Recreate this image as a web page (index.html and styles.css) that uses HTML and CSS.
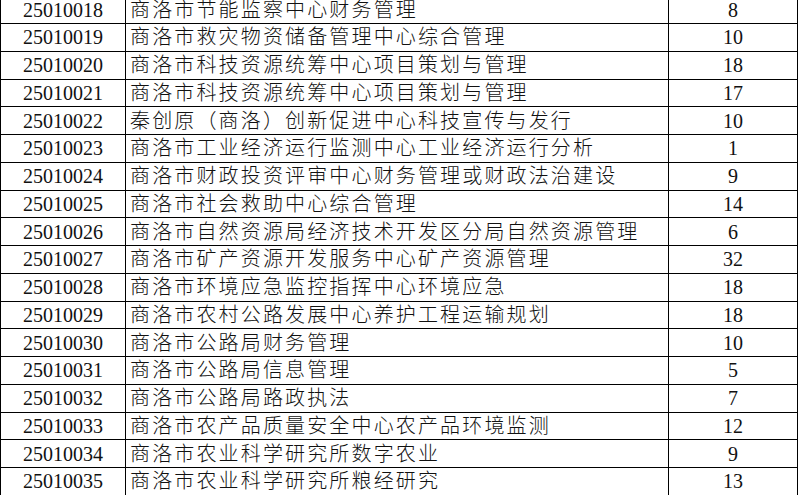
FILE: index.html
```html
<!DOCTYPE html>
<html lang="zh-CN">
<head>
<meta charset="utf-8">
<title>岗位表</title>
<link rel="stylesheet" href="styles.css">
</head>
<body>
<div class="sheet">
  <div class="code">25010018</div><div class="name">商洛市节能监察中心财务管理</div><div class="num">8</div>
  <div class="code">25010019</div><div class="name">商洛市救灾物资储备管理中心综合管理</div><div class="num">10</div>
  <div class="code">25010020</div><div class="name">商洛市科技资源统筹中心项目策划与管理</div><div class="num">18</div>
  <div class="code">25010021</div><div class="name">商洛市科技资源统筹中心项目策划与管理</div><div class="num">17</div>
  <div class="code">25010022</div><div class="name">秦创原（商洛）创新促进中心科技宣传与发行</div><div class="num">10</div>
  <div class="code">25010023</div><div class="name">商洛市工业经济运行监测中心工业经济运行分析</div><div class="num">1</div>
  <div class="code">25010024</div><div class="name">商洛市财政投资评审中心财务管理或财政法治建设</div><div class="num">9</div>
  <div class="code">25010025</div><div class="name">商洛市社会救助中心综合管理</div><div class="num">14</div>
  <div class="code">25010026</div><div class="name">商洛市自然资源局经济技术开发区分局自然资源管理</div><div class="num">6</div>
  <div class="code">25010027</div><div class="name">商洛市矿产资源开发服务中心矿产资源管理</div><div class="num">32</div>
  <div class="code">25010028</div><div class="name">商洛市环境应急监控指挥中心环境应急</div><div class="num">18</div>
  <div class="code">25010029</div><div class="name">商洛市农村公路发展中心养护工程运输规划</div><div class="num">18</div>
  <div class="code">25010030</div><div class="name">商洛市公路局财务管理</div><div class="num">10</div>
  <div class="code">25010031</div><div class="name">商洛市公路局信息管理</div><div class="num">5</div>
  <div class="code">25010032</div><div class="name">商洛市公路局路政执法</div><div class="num">7</div>
  <div class="code">25010033</div><div class="name">商洛市农产品质量安全中心农产品环境监测</div><div class="num">12</div>
  <div class="code">25010034</div><div class="name">商洛市农业科学研究所数字农业</div><div class="num">9</div>
  <div class="code">25010035</div><div class="name">商洛市农业科学研究所粮经研究</div><div class="num">13</div>
</div>
</body>
</html>
```
FILE: styles.css
```css
html, body {
  margin: 0;
  padding: 0;
  background: #fff;
  overflow: hidden;
  height: 495px;
}

.sheet {
  display: grid;
  grid-template-columns: 124px 542px 128px;
  grid-auto-rows: 26.75px;
  gap: 1px;
  padding: 0 1px 1px 1px;
  width: max-content;
  background: #000;
  margin-top: -3.75px;
  font-family: "Liberation Serif", "Noto Sans CJK SC", serif;
  font-size: 20px;
  color: #111;
}

.sheet > div {
  background: #fff;
  display: flex;
  align-items: center;
  line-height: 1;
  white-space: nowrap;
}

.code,
.num {
  justify-content: center;
}

.name {
  padding-left: 4px;
  letter-spacing: 2.15px;
  font-weight: 300;
}
```
